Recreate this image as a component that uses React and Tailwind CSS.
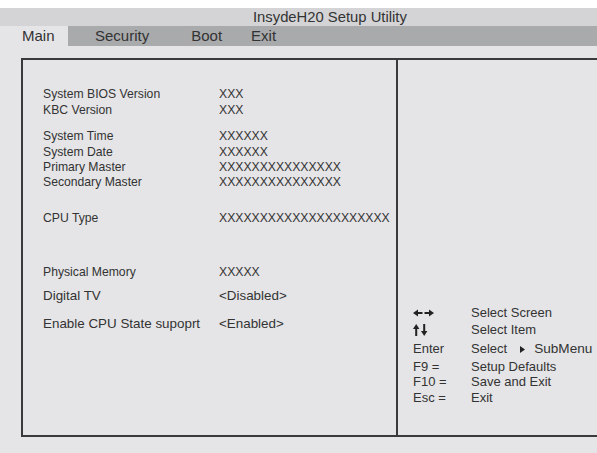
import React from "react";

const LeftRight = () => (
  <svg width="21" height="10" viewBox="0 0 21 10" className="block">
    <rect x="3" y="4" width="6.5" height="2" fill="#222" />
    <polygon points="0,5 5,1.6 5,8.4" fill="#222" />
    <rect x="11.5" y="4" width="6.5" height="2" fill="#222" />
    <polygon points="21,5 16,1.6 16,8.4" fill="#222" />
  </svg>
);

const UpDown = () => (
  <svg width="15" height="12" viewBox="0 0 15 12" className="block">
    <rect x="2.2" y="3" width="2" height="9" fill="#222" />
    <polygon points="3.2,0 0,5 6.4,5" fill="#222" />
    <rect x="10.2" y="0" width="2" height="9" fill="#222" />
    <polygon points="11.2,12 8,7 14.4,7" fill="#222" />
  </svg>
);

const Row = ({ label, value, h, mt = "", big }) => (
  <div className={`flex items-center ${h} ${mt} ${big ? "text-[13.4px]" : "text-[12.2px]"}`}>
    <div className="w-[176px] shrink-0">{label}</div>
    <div>{value}</div>
  </div>
);

const KeyRow = ({ k, d, h }) => (
  <div className={`flex items-center ${h}`}>
    <div className="w-[58px] shrink-0 flex items-center">{k}</div>
    <div className="flex items-center">{d}</div>
  </div>
);

export default function App() {
  return (
    <div
      className="w-[597px] h-[453px] overflow-hidden bg-white flex flex-col text-[#333]"
      style={{ fontFamily: '"Liberation Sans", Arial, sans-serif' }}
    >
      <div className="h-[8px] shrink-0" />
      <div className="h-[18px] shrink-0 bg-[#d4d4d6] text-[14.8px] leading-[18px] pl-[253px]">
        InsydeH20 Setup Utility
      </div>
      <div className="h-[20px] shrink-0 bg-[#a9aaac] flex text-[15px] leading-[20px]">
        <div className="w-[68px] bg-[#e5e5e7] pl-[22px]">Main</div>
        <div className="pl-[27px]">Security</div>
        <div className="pl-[42px]">Boot</div>
        <div className="pl-[29px]">Exit</div>
      </div>
      <div className="flex-1 bg-[#e5e5e7] pl-[21px] pt-[12px]">
        <div className="w-[600px] h-[379px] border-2 border-r-0 border-[#3a3a3a] flex text-[13px] leading-[16px]">
          <div className="w-[375px] shrink-0 border-r-2 border-[#3a3a3a] pl-[20px] pt-[26px] flex flex-col">
            <Row label="System BIOS Version" value="XXX" h="h-[16px]" />
            <Row label="KBC Version" value="XXX" h="h-[16px]" />
            <Row label="System Time" value="XXXXXX" h="h-[16px]" mt="mt-[10px]" />
            <Row label="System Date" value="XXXXXX" h="h-[15px]" />
            <Row label="Primary Master" value="XXXXXXXXXXXXXXX" h="h-[15px]" />
            <Row label="Secondary Master" value="XXXXXXXXXXXXXXX" h="h-[16px]" />
            <Row label="CPU Type" value="XXXXXXXXXXXXXXXXXXXXX" h="h-[16px]" mt="mt-[20px]" />
            <Row label="Physical Memory" value="XXXXX" h="h-[16px]" mt="mt-[38px]" />
            <Row label="Digital TV" value="<Disabled>" h="h-[16px]" mt="mt-[8px]" big />
            <Row label="Enable CPU State supoprt" value="<Enabled>" h="h-[16px]" mt="mt-[12px]" big />
          </div>
          <div className="flex-1 pl-[15px] pt-[245px] flex flex-col">
            <KeyRow k={<LeftRight />} d="Select Screen" h="h-[15px]" />
            <KeyRow k={<UpDown />} d="Select Item" h="h-[19px]" />
            <KeyRow
              k="Enter"
              d={
                <>
                  <span>Select</span>
                  <svg width="5" height="7" viewBox="0 0 5 7" className="ml-[13px] mr-[9px] block">
                    <polygon points="0,0 5,3.5 0,7" fill="#222" />
                  </svg>
                  <span className="text-[13.6px]">SubMenu</span>
                </>
              }
              h="h-[20px]"
            />
            <KeyRow k="F9 =" d="Setup Defaults" h="h-[15px]" />
            <KeyRow k="F10 =" d="Save and Exit" h="h-[16px]" />
            <KeyRow k="Esc =" d="Exit" h="h-[16px]" />
          </div>
        </div>
      </div>
    </div>
  );
}
